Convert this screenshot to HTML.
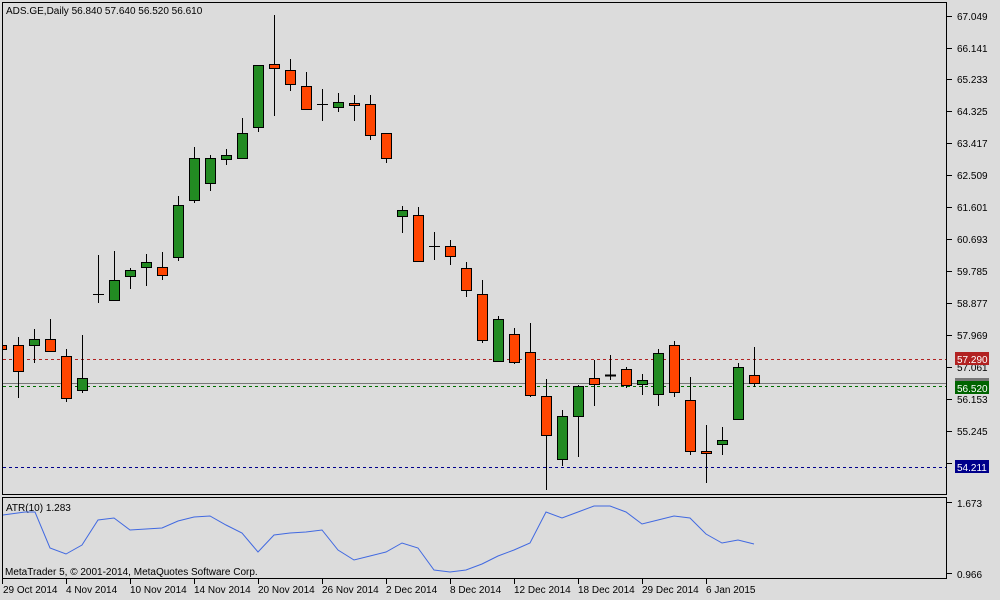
<!DOCTYPE html>
<html><head><meta charset="utf-8"><style>
html,body{margin:0;padding:0;background:#dcdcdc;}
svg{display:block;font-family:"Liberation Sans",sans-serif;font-size:10px;}
</style></head><body>
<svg width="1000" height="600" viewBox="0 0 1000 600" xmlns="http://www.w3.org/2000/svg">
<rect width="1000" height="600" fill="#dcdcdc"/>
<!-- main panel -->
<rect x="2.5" y="2.5" width="944" height="492" fill="#dcdcdc" stroke="#000" stroke-width="1"/>
<rect x="2.5" y="497.5" width="944" height="81" fill="#dcdcdc" stroke="#000" stroke-width="1"/>
<text x="6" y="14" fill="#000">ADS.GE,Daily  56.840 57.640 56.520 56.610</text>
<!-- horizontal lines -->
<line x1="3" x2="946" y1="359.5" y2="359.5" stroke="#b22222" stroke-dasharray="3,3"/>
<line x1="3" x2="946" y1="383.5" y2="383.5" stroke="#777"/>
<line x1="3" x2="946" y1="386.5" y2="386.5" stroke="#007000" stroke-dasharray="3,3"/>
<line x1="3" x2="946" y1="467.5" y2="467.5" stroke="#00008b" stroke-dasharray="3,3"/>
<g stroke="#000" stroke-width="1">
<!-- wicks -->
<path d="M18.5 337V398M34.5 329V363M50.5 319V351M66.5 349V402M82.5 335V393M98.5 255V303M114.5 251V300M130.5 268V289M146.5 254V286M162.5 252V280M178.5 196V261M194.5 147V203M210.5 155V191M226.5 149V165M242.5 118V158M258.5 65V132M274.5 15V116M290.5 59V91M306.5 72V109M322.5 89V121M338.5 93V112M354.5 95V121M370.5 95V140M386.5 133V163M402.5 206V233M418.5 207V262M434.5 232V260M450.5 240V265M466.5 262V297M482.5 280V343M498.5 316V362M514.5 328V364M530.5 323V397M546.5 379V490M562.5 410V466M578.5 385V457M594.5 360V406M610.5 355V380M626.5 367V388M642.5 374V395M658.5 349V406M674.5 341V397M690.5 377V455M706.5 425V483M722.5 427V455M738.5 363V420M754.5 347V387"/>
<path d="M93 294.5H104M317 104.5H328M429 246.5H440M605 375.5H616" stroke-width="1"/>
<path d="M605 375.5H616" stroke-width="2"/>
</g>
<g stroke="#000" stroke-width="1" fill="#ff4500">
<rect x="2.5" y="345.5" width="4" height="4"/>
<rect x="13.5" y="345.5" width="10" height="26"/>
<rect x="45.5" y="339.5" width="10" height="12"/>
<rect x="61.5" y="356.5" width="10" height="42"/>
<rect x="157.5" y="267.5" width="10" height="8"/>
<rect x="269.5" y="64.5" width="10" height="4"/>
<rect x="285.5" y="70.5" width="10" height="14"/>
<rect x="301.5" y="86.5" width="10" height="23"/>
<rect x="349.5" y="103.5" width="10" height="2"/>
<rect x="365.5" y="104.5" width="10" height="31"/>
<rect x="381.5" y="133.5" width="10" height="25"/>
<rect x="413.5" y="215.5" width="10" height="46"/>
<rect x="445.5" y="246.5" width="10" height="10"/>
<rect x="461.5" y="268.5" width="10" height="22"/>
<rect x="477.5" y="294.5" width="10" height="46"/>
<rect x="509.5" y="334.5" width="10" height="28"/>
<rect x="525.5" y="352.5" width="10" height="43"/>
<rect x="541.5" y="396.5" width="10" height="39"/>
<rect x="589.5" y="378.5" width="10" height="6"/>
<rect x="621.5" y="369.5" width="10" height="16"/>
<rect x="669.5" y="345.5" width="10" height="47"/>
<rect x="685.5" y="400.5" width="10" height="51"/>
<rect x="701.5" y="451.5" width="10" height="2"/>
<rect x="749.5" y="375.5" width="10" height="8"/>
</g>
<g stroke="#000" stroke-width="1" fill="#228b22">
<rect x="29.5" y="339.5" width="10" height="6"/>
<rect x="77.5" y="378.5" width="10" height="12"/>
<rect x="109.5" y="280.5" width="10" height="20"/>
<rect x="125.5" y="270.5" width="10" height="6"/>
<rect x="141.5" y="262.5" width="10" height="5"/>
<rect x="173.5" y="205.5" width="10" height="52"/>
<rect x="189.5" y="158.5" width="10" height="42"/>
<rect x="205.5" y="158.5" width="10" height="25"/>
<rect x="221.5" y="155.5" width="10" height="4"/>
<rect x="237.5" y="133.5" width="10" height="25"/>
<rect x="253.5" y="65.5" width="10" height="62"/>
<rect x="333.5" y="102.5" width="10" height="5"/>
<rect x="397.5" y="210.5" width="10" height="6"/>
<rect x="493.5" y="319.5" width="10" height="42"/>
<rect x="557.5" y="416.5" width="10" height="43"/>
<rect x="573.5" y="386.5" width="10" height="30"/>
<rect x="637.5" y="380.5" width="10" height="4"/>
<rect x="653.5" y="353.5" width="10" height="41"/>
<rect x="717.5" y="440.5" width="10" height="4"/>
<rect x="733.5" y="367.5" width="10" height="52"/>
</g>
<!-- price axis -->
<g fill="#000">
<text x="957" y="20">67.049</text><text x="957" y="52">66.141</text><text x="957" y="83">65.233</text>
<text x="957" y="115">64.325</text><text x="957" y="147">63.417</text><text x="957" y="179">62.509</text>
<text x="957" y="211">61.601</text><text x="957" y="243">60.693</text><text x="957" y="275">59.785</text>
<text x="957" y="307">58.877</text><text x="957" y="339">57.969</text><text x="957" y="371">57.061</text>
<text x="957" y="403">56.153</text><text x="957" y="435">55.245</text><text x="957" y="467">54.337</text>
<text x="957" y="507">1.673</text><text x="957" y="578">0.966</text>
</g>
<path d="M947 16.5h5M947 48.5h5M947 79.5h5M947 111.5h5M947 143.5h5M947 175.5h5M947 207.5h5M947 239.5h5M947 271.5h5M947 303.5h5M947 335.5h5M947 367.5h5M947 399.5h5M947 431.5h5M947 463.5h5M947 502.5h5M947 573.5h5" stroke="#000"/>
<rect x="955" y="352" width="34" height="13" fill="#b22222"/><text x="957" y="363" fill="#fff">57.290</text>
<rect x="955" y="378" width="34" height="4" fill="#777"/>
<rect x="955" y="381" width="34" height="13" fill="#006400"/><text x="957" y="392" fill="#fff">56.520</text>
<rect x="955" y="460" width="34" height="13" fill="#00008b"/><text x="957" y="471" fill="#fff">54.211</text>
<!-- ATR -->
<text x="6" y="511" fill="#000">ATR(10) 1.283</text>
<polyline fill="none" stroke="#4169e1" stroke-width="1" points="3,515 25,512 35,512 50,548 66,554 82,545 98,520 114,518 130,530 146,529 162,528 178,521 194,517 210,516 226,525 242,533 258,552 274,535 290,533 306,532 322,530 338,550 354,560 370,556 386,552 402,543 418,548 434,570 450,572 466,570 482,564 498,556 514,550 530,543 546,512 562,518 578,512 594,506 610,506 626,512 642,524 658,520 674,516 690,518 706,534 722,543 738,540 754,544"/>
<text x="5" y="575" fill="#000">MetaTrader 5, © 2001-2014, MetaQuotes Software Corp.</text>
<!-- time axis -->
<path d="M2.5 579v5M66.5 579v5M130.5 579v5M194.5 579v5M258.5 579v5M322.5 579v5M386.5 579v5M450.5 579v5M514.5 579v5M578.5 579v5M642.5 579v5M706.5 579v5" stroke="#000"/>
<g fill="#000">
<text x="3" y="593">29 Oct 2014</text><text x="66" y="593">4 Nov 2014</text><text x="130" y="593">10 Nov 2014</text>
<text x="194" y="593">14 Nov 2014</text><text x="258" y="593">20 Nov 2014</text><text x="322" y="593">26 Nov 2014</text>
<text x="386" y="593">2 Dec 2014</text><text x="450" y="593">8 Dec 2014</text><text x="514" y="593">12 Dec 2014</text>
<text x="578" y="593">18 Dec 2014</text><text x="642" y="593">29 Dec 2014</text><text x="706" y="593">6 Jan 2015</text>
</g>
</svg>
</body></html>
